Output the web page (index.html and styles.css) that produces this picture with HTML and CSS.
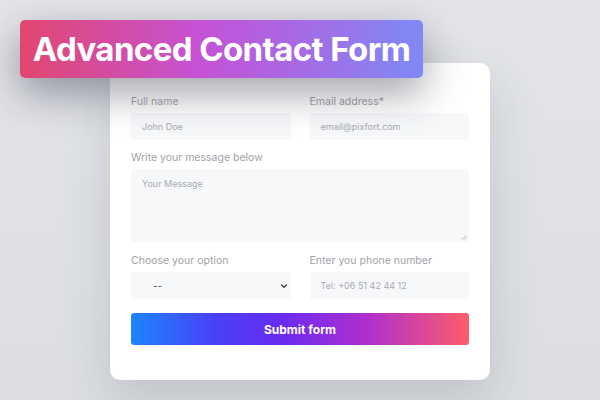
FILE: index.html
```html
<!DOCTYPE html>
<html>
<head>
<meta charset="utf-8">
<link rel="stylesheet" href="styles.css">
</head>
<body>
<div class="stage">
  <div class="card">
    <div class="row">
      <div class="field">
        <div class="label">Full name</div>
        <div class="input">John Doe</div>
      </div>
      <div class="field">
        <div class="label">Email address*</div>
        <div class="input">email@pixfort.com</div>
      </div>
    </div>
    <div class="field">
      <div class="label">Write your message below</div>
      <div class="textarea">Your Message
        <svg class="grip" width="6" height="6" viewBox="0 0 6 6"><path d="M5.5 1 L1 5.5 M5.5 3.5 L3.5 5.5" stroke="#9a9ca0" stroke-width="0.8"/></svg>
      </div>
    </div>
    <div class="row">
      <div class="field">
        <div class="label">Choose your option</div>
        <div class="input select last"><span class="dash">--</span>
          <svg width="8" height="6" viewBox="0 0 8 6"><path d="M1.2 1.5 L4 4.3 L6.8 1.5" fill="none" stroke="#444" stroke-width="1.4"/></svg>
        </div>
      </div>
      <div class="field">
        <div class="label">Enter you phone number</div>
        <div class="input last">Tel: +06 51 42 44 12</div>
      </div>
    </div>
    <div class="button">Submit form</div>
  </div>
  <div class="banner">Advanced Contact Form</div>
</div>
</body>
</html>
```
FILE: styles.css
```css
html, body {
  margin: 0;
  padding: 0;
}
body {
  width: 600px;
  height: 400px;
  overflow: hidden;
  background: linear-gradient(180deg, #e3e5e9 0%, #dcdee2 100%);
  font-family: Inter, "Noto Sans", sans-serif;
}
.stage {
  position: relative;
  width: 600px;
  height: 400px;
  padding: 63px 0 0 110px;
  box-sizing: border-box;
}
.card {
  width: 380px;
  height: 317px;
  box-sizing: border-box;
  background: #fff;
  border-radius: 10px;
  box-shadow: 0 20px 50px rgba(60, 64, 80, 0.18);
  padding: 32px 21px 0 21px;
  display: flex;
  flex-direction: column;
}
.row {
  display: flex;
  gap: 19px;
}
.row .field {
  flex: 1;
}
.field {
  display: flex;
  flex-direction: column;
}
.label {
  font-size: 10.5px;
  color: #a0a3a8;
  height: 18px;
  line-height: 13px;
}
.input {
  height: 27px;
  background: #f7f8fa;
  border-radius: 2px;
  font-size: 9px;
  color: #a8abb0;
  padding-left: 11px;
  display: flex;
  align-items: center;
  margin-bottom: 11px;
}
.input.last {
  margin-bottom: 14px;
}
.textarea {
  position: relative;
  height: 73px;
  background: #f7f8fa;
  border-radius: 2px;
  font-size: 9px;
  color: #a8abb0;
  padding: 9px 11px 0;
  box-sizing: border-box;
  margin-bottom: 12px;
}
.grip {
  position: absolute;
  right: 2px;
  bottom: 2px;
}
.select {
  justify-content: space-between;
  padding: 0 3px 0 22px;
  color: #555;
}
.dash {
  font-size: 10px;
}
.button {
  height: 32px;
  border-radius: 3px;
  background: linear-gradient(90deg, #1c86fe 0%, #4a3ff8 25%, #6a2bf0 45%, #b02fcd 70%, #fd5d69 100%);
  color: #fff;
  font-weight: 700;
  font-size: 12px;
  display: flex;
  align-items: center;
  justify-content: center;
}
.banner {
  position: absolute;
  left: 20px;
  top: 20px;
  width: 403px;
  height: 58px;
  border-radius: 5px;
  background: linear-gradient(90deg, #e2476f 0%, #c552d6 45%, #7f89f6 100%);
  box-shadow: 0 15px 40px rgba(30, 30, 50, 0.42);
  color: #fff;
  font-weight: 700;
  font-size: 33px;
  letter-spacing: -0.6px;
  display: flex;
  align-items: center;
  justify-content: center;
}
```
